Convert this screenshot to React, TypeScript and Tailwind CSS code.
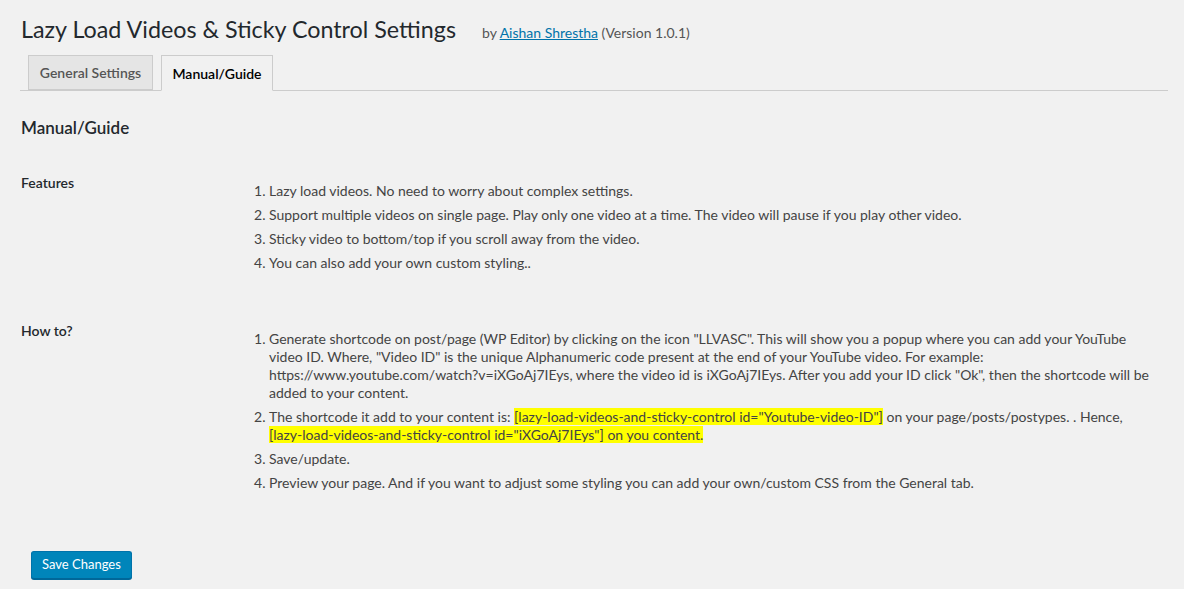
import React from 'react';

const features = [
    'Lazy load videos. No need to worry about complex settings.',
    'Support multiple videos on single page. Play only one video at a time. The video will pause if you play other video.',
    'Sticky video to bottom/top if you scroll away from the video.',
    'You can also add your own custom styling..',
];

const Item = ({ n, children }: { n: number; children: React.ReactNode }) => (
    <li className="flex mb-[6px]">
        <span className="w-[15px] shrink-0">{n}.</span>
        <span>{children}</span>
    </li>
);

const App = () => {
    return (
        <div className="min-h-screen bg-[#f1f1f1] pl-[20px] pr-[16px] font-[Lato,sans-serif] text-[14px] text-[#444]">
            <div className="flex items-baseline pt-[14px] pl-[1px]">
                <h1 className="text-[23.3px] leading-[30px] text-[#23282d]">Lazy Load Videos &amp; Sticky Control Settings</h1>
                <span className="ml-[26px] text-[14px] text-[#555]">
                    by <a href="#author" className="text-[#0073aa] underline">Aishan Shrestha</a> (Version 1.0.1)
                </span>
            </div>

            <nav className="mt-[11px] flex gap-[8px] pl-2 border-b border-[#ccc]">
                <a href="#general" className="-mb-px h-[35px] w-[125px] justify-center flex items-center border border-[#ccc] bg-[#e5e5e5] text-[#555] font-semibold">
                    General Settings
                </a>
                <a href="#manual" className="-mb-px h-[36px] w-[112px] justify-center flex items-center border border-[#ccc] border-b-[#f1f1f1] bg-[#f1f1f1] text-black font-semibold">
                    Manual/Guide
                </a>
            </nav>

            <h2 className="mt-[26px] pl-[1px] text-[17px] leading-[22px] font-semibold text-[#23282d]">Manual/Guide</h2>

            <div className="mt-[15px] flex leading-[18px]">
                <div className="w-[234px] shrink-0 pt-[20px] pl-[1px] font-semibold text-[#23282d]">Features</div>
                <ol className="pt-[28px] pb-[24px] pr-[10px]">
                    {features.map((f, i) => (
                        <Item key={i} n={i + 1}>{f}</Item>
                    ))}
                </ol>
            </div>

            <div className="flex leading-[18px]">
                <div className="w-[234px] shrink-0 pt-[20px] pl-[1px] font-semibold text-[#23282d]">How to?</div>
                <ol className="pt-[28px] pr-[10px]">
                    <Item n={1}>
                        Generate shortcode on post/page (WP Editor) by clicking on the icon "LLVASC". This will show you a popup where you can add your YouTube video ID. Where, "Video ID" is the unique Alphanumeric code present at the end of your YouTube video. For example: https://www.youtube.com/watch?v=iXGoAj7IEys, where the video id is iXGoAj7IEys. After you add your ID click "Ok", then the shortcode will be added to your content.
                    </Item>
                    <Item n={2}>
                        The shortcode it add to your content is: <span className="bg-[#ffff00]">[lazy-load-videos-and-sticky-control id="Youtube-video-ID"]</span> on your page/posts/postypes. . Hence, <span className="bg-[#ffff00]">[lazy-load-videos-and-sticky-control id="iXGoAj7IEys"] on you content.</span>
                    </Item>
                    <Item n={3}>Save/update.</Item>
                    <Item n={4}>Preview your page. And if you want to adjust some styling you can add your own/custom CSS from the General tab.</Item>
                </ol>
            </div>

            <div className="pt-[53px] pl-[11px] pb-[11px]">
                <button type="submit" className="h-[28px] px-[10px] rounded-[3px] border border-[#0073aa] border-b-[#006799] bg-[#0085ba] text-white text-[13px] shadow-[0_1px_0_#006799]">
                    Save Changes
                </button>
            </div>
        </div>
    );
};

export default App;
